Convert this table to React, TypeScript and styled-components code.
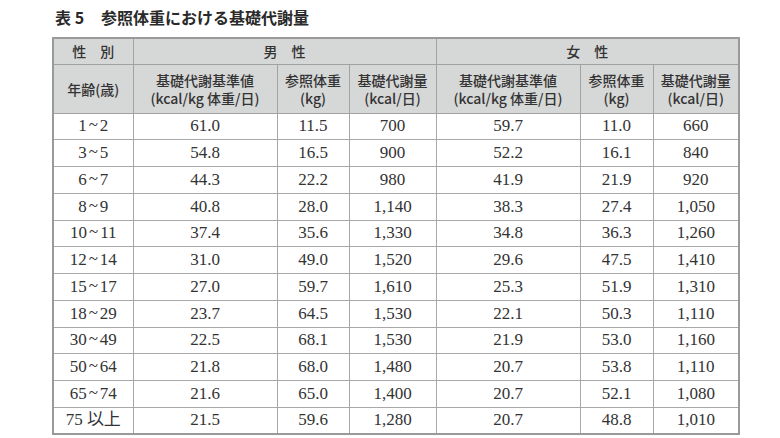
import React from 'react'
import styled, { createGlobalStyle } from 'styled-components'

const GlobalStyle = createGlobalStyle`
  body {
    margin: 0;
    background: #ffffff;
    font-family: "Noto Sans CJK JP", "Noto Sans", sans-serif;
  }
`

// 年齢 / 男性(基準値, 体重, 代謝量) / 女性(基準値, 体重, 代謝量)
const rows: string[][] = [
  ['1~2', '61.0', '11.5', '700', '59.7', '11.0', '660'],
  ['3~5', '54.8', '16.5', '900', '52.2', '16.1', '840'],
  ['6~7', '44.3', '22.2', '980', '41.9', '21.9', '920'],
  ['8~9', '40.8', '28.0', '1,140', '38.3', '27.4', '1,050'],
  ['10~11', '37.4', '35.6', '1,330', '34.8', '36.3', '1,260'],
  ['12~14', '31.0', '49.0', '1,520', '29.6', '47.5', '1,410'],
  ['15~17', '27.0', '59.7', '1,610', '25.3', '51.9', '1,310'],
  ['18~29', '23.7', '64.5', '1,530', '22.1', '50.3', '1,110'],
  ['30~49', '22.5', '68.1', '1,530', '21.9', '53.0', '1,160'],
  ['50~64', '21.8', '68.0', '1,480', '20.7', '53.8', '1,110'],
  ['65~74', '21.6', '65.0', '1,400', '20.7', '52.1', '1,080'],
  ['75 以上', '21.5', '59.6', '1,280', '20.7', '48.8', '1,010'],
]

const colWidths = [80, 144, 72, 87, 144, 73, 86]

const subHeads = [
  ['基礎代謝基準値', '(kcal/kg 体重/日)'],
  ['参照体重', '(kg)'],
  ['基礎代謝量', '(kcal/日)'],
]

// 年齢の「~」は少し幅を持たせる
const renderAge = (age: string) => {
  const parts = age.split('~')
  if (parts.length < 2) return age
  return (
    <>
      {parts[0]}
      <Tilde>~</Tilde>
      {parts[1]}
    </>
  )
}

const App = () => {
  return (
    <Page>
      <GlobalStyle />
      <Title>
        表 5<TitleGap />参照体重における基礎代謝量
      </Title>
      <Table>
        <colgroup>
          {colWidths.map((w, i) => (
            <col key={i} style={{ width: w }} />
          ))}
        </colgroup>
        <thead>
          <tr>
            <HeadCell _height={26}>性　別</HeadCell>
            <HeadCell colSpan={3} _height={26}>
              男　性
            </HeadCell>
            <HeadCell colSpan={3} _height={26}>
              女　性
            </HeadCell>
          </tr>
          <tr>
            <HeadCell _height={49}>年齢(歳)</HeadCell>
            {[...subHeads, ...subHeads].map(([a, b], i) => (
              <HeadCell key={i} _height={49}>
                {a}
                <br />
                {b}
              </HeadCell>
            ))}
          </tr>
        </thead>
        <tbody>
          {rows.map((row) => (
            <tr key={row[0]}>
              {row.map((v, i) => (
                <Cell key={i}>{i === 0 ? renderAge(v) : v}</Cell>
              ))}
            </tr>
          ))}
        </tbody>
      </Table>
    </Page>
  )
}

const Page = styled.div`
  padding: 6px 0 0 52px;
`

const Title = styled.h1`
  margin: 0 0 8px 3px;
  font-size: 16px;
  line-height: 23px;
  font-weight: 700;
  color: #2a2a2a;
  display: flex;
  align-items: center;
`

const TitleGap = styled.span`
  display: inline-block;
  width: 17px;
`

const Table = styled.table`
  width: 686px;
  table-layout: fixed;
  border-collapse: collapse;
  border: 2px solid #9a9a9a;
`

const HeadCell = styled.th<{ _height: number }>`
  height: ${({ _height }) => _height}px;
  box-sizing: border-box;
  padding: 0;
  background-color: #d6d7d7;
  border: 1px solid #a2a2a2;
  font-family: "Noto Sans CJK JP", "Noto Sans", sans-serif;
  font-size: 14px;
  font-weight: 500;
  line-height: 18px;
  color: #333333;
  text-align: center;
  vertical-align: middle;
`

const Cell = styled.td`
  height: 26.75px;
  box-sizing: border-box;
  padding: 0;
  border: 1px solid #a8a8a8;
  font-family: "Liberation Serif", "Noto Sans CJK JP", serif;
  font-size: 17px;
  line-height: 16px;
  color: #333333;
  text-align: center;
  vertical-align: middle;
`

const Tilde = styled.span`
  display: inline-block;
  margin: 0 2px;
  transform: translateY(-1px);
`

export default App
